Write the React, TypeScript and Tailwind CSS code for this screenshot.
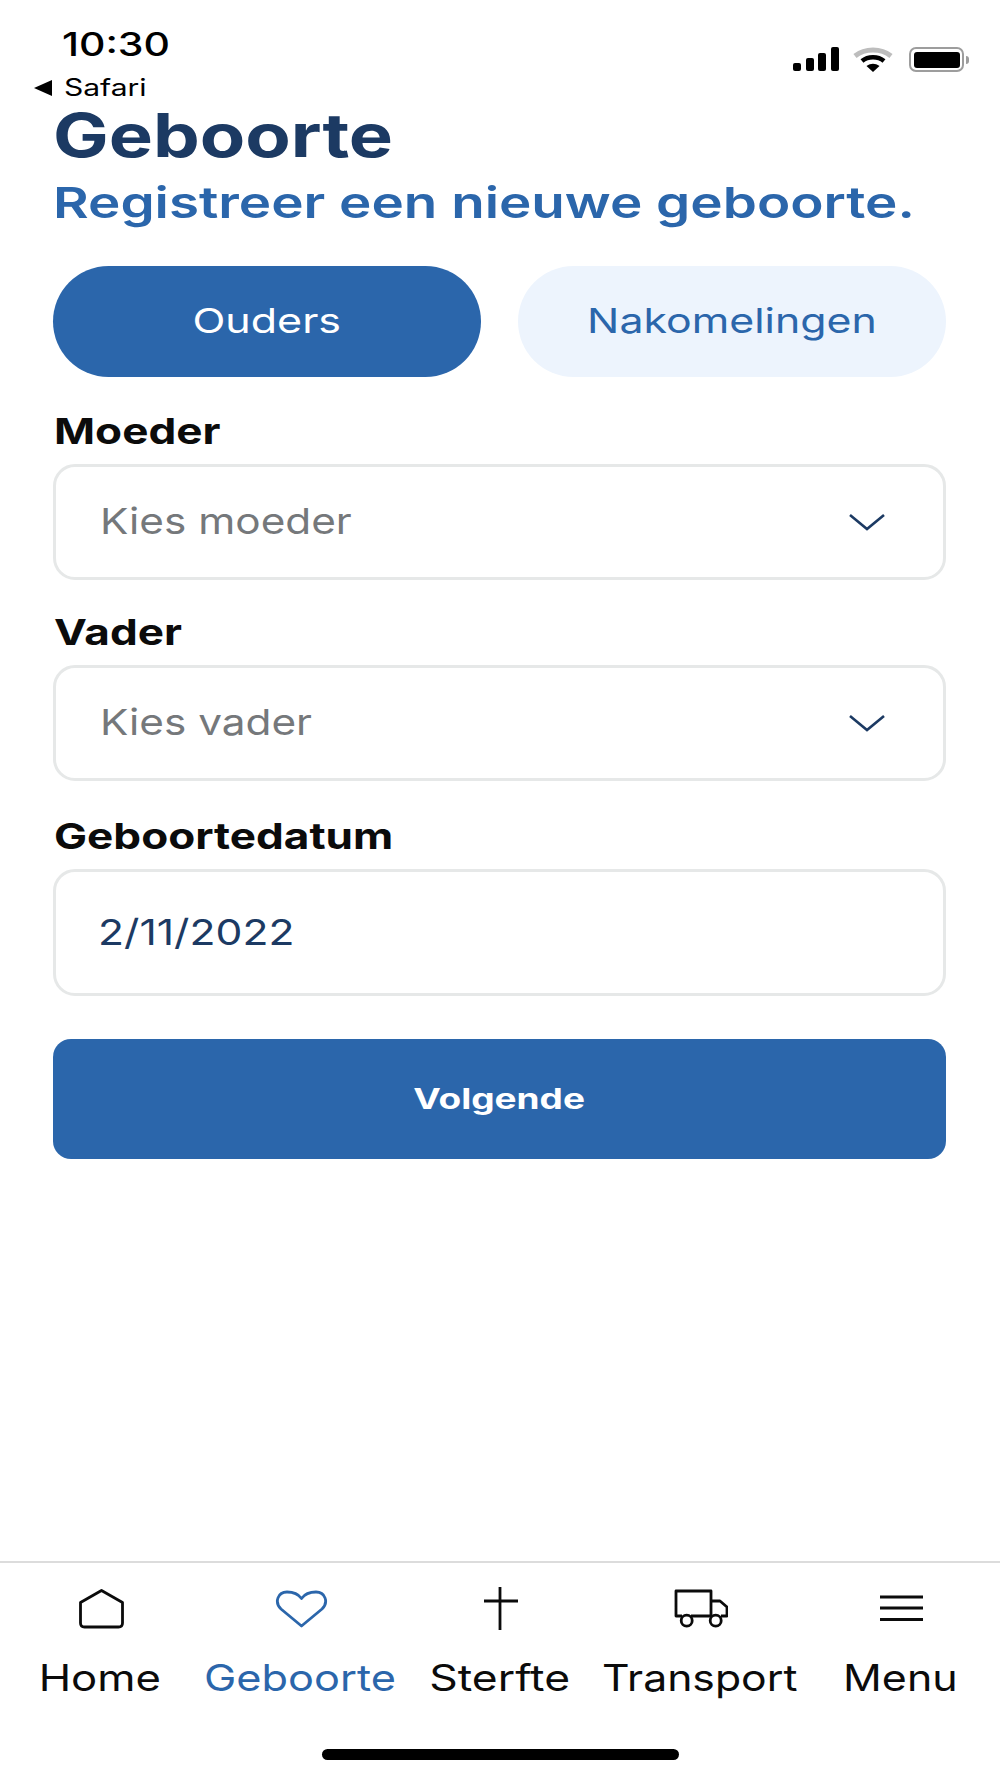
const font = "font-['Inter',sans-serif]";

function Chevron() {
  return (
    <svg width="38" height="18" viewBox="0 0 38 18" fill="none" className="stroke-[#1c3a63]" strokeWidth="2.6">
      <path d="M2 2 L19 16 L36 2" />
    </svg>
  );
}

function StatusIcons() {
  return (
    <div className="flex items-start gap-[14px] pt-[18px]">
      <svg width="46" height="24" viewBox="0 0 46 24" fill="#000">
        <rect x="0" y="16" width="8" height="8" rx="2" />
        <rect x="13" y="11" width="8" height="13" rx="2" />
        <rect x="25" y="6" width="8" height="18" rx="2" />
        <rect x="38" y="0" width="8" height="24" rx="2" />
      </svg>
      <svg width="40" height="25" viewBox="0 0 40 25" fill="none">
        <path d="M2 9 C12 1 28 1 38 9" stroke="#bdbdbd" strokeWidth="5" />
        <path d="M9 14 C15 9 25 9 31 14" stroke="#000" strokeWidth="4.5" />
        <path d="M13.5 19 L20 25 L26.5 19 C22 16 18 16 13.5 19 Z" fill="#000" />
      </svg>
      <div className="ml-[2px] flex items-center">
        <div className="flex h-[25px] w-[55px] items-center justify-center rounded-[7px] border-[2.5px] border-[#9d9d9d]">
          <div className="h-[16px] w-[46px] rounded-[3px] bg-black" />
        </div>
        <div className="ml-[2px] h-[8px] w-[3px] rounded-r-full bg-[#9d9d9d]" />
      </div>
    </div>
  );
}

function Field({ label, children, className }: { label: string; children: React.ReactNode; className: string }) {
  return (
    <div className={className}>
      <div className="ml-[1px] text-[36px] font-bold leading-[36px] text-[#0b0b0b]">
        <span className="inline-block origin-left scale-x-[1.225]">{label}</span>
      </div>
      {children}
    </div>
  );
}

function SelectBox({ placeholder }: { placeholder: string }) {
  return (
    <div className="mt-[15px] flex h-[116px] items-center justify-between rounded-[22px] border-[3px] border-[#e6e8e8] bg-white pl-[44px] pr-[57px]">
      <span className="mb-[2px] inline-block origin-left scale-x-[1.175] text-[36px] leading-[36px] text-[#75787b]">{placeholder}</span>
      <Chevron />
    </div>
  );
}

const navItems = [
  {
    label: 'Home',
    active: false,
    scale: 'scale-x-[1.18]',
    icon: <path d="M8.5 15.5 L29.5 3.5 L50.5 15.5 V36 Q50.5 40 46.5 40 H12.5 Q8.5 40 8.5 36 Z" strokeLinejoin="round" />,
  },
  {
    label: 'Geboorte',
    active: true,
    scale: 'scale-x-[1.17]',
    icon: <path d="M29.5 39 L9 22 C2 15 6 5 15 5 C22 5 27 8 29.5 11.5 C32 8 37 5 44 5 C53 5 57 15 50 22 Z" strokeLinejoin="round" />,
  },
  {
    label: 'Sterfte',
    active: false,
    scale: 'scale-x-[1.2]',
    icon: <path d="M28 0 V43 M12 14 H46" />,
  },
  {
    label: 'Transport',
    active: false,
    scale: 'scale-x-[1.155]',
    icon: (
      <>
        <path d="M10 29 H4 V4 H39 V29 H19 M39 14 H48 L55 20 V29 H49 M39 29 H38" strokeLinejoin="round" />
        <circle cx="14.7" cy="33.7" r="5.5" />
        <circle cx="43.7" cy="33.7" r="5.5" />
      </>
    ),
  },
  {
    label: 'Menu',
    active: false,
    scale: 'scale-x-[1.16]',
    icon: <path d="M8 10 H51 M8 21 H51 M8 32.5 H51" />,
  },
];

export default function App() {
  return (
    <div className={`${font} flex h-[1778px] w-[1000px] flex-col overflow-hidden bg-white`}>
      <div className="flex items-start justify-between pl-[34px] pr-[31px] pt-[29px]">
        <div>
          <div className="ml-[28px] text-[32px] font-medium leading-[32px] text-black">
            <span className="inline-block origin-left scale-x-[1.28]">10:30</span>
          </div>
          <div className="mt-[15px] flex items-center gap-[12px]">
            <div className="h-0 w-0 border-y-[8px] border-r-[18px] border-y-transparent border-r-black" />
            <span className="inline-block origin-left scale-x-[1.25] text-[24px] leading-[24px] text-black">Safari</span>
          </div>
        </div>
        <StatusIcons />
      </div>

      <main className="pl-[53px] pr-[54px]">
        <h1 className="mt-[5px] text-[60px] font-bold leading-[60px] text-[#1c3a63]">
          <span className="inline-block origin-left scale-x-[1.237]">Geboorte</span>
        </h1>
        <p className="mt-[16px] whitespace-nowrap text-[43px] font-semibold leading-[43px] text-[#2b66ab]">
          <span className="inline-block origin-left scale-x-[1.273]">Registreer een nieuwe geboorte.</span>
        </p>

        <div className="mt-[42px] grid grid-cols-2 gap-[37px]">
          <button className="h-[111px] rounded-full bg-[#2b66ab] pb-[2px] text-[34px] text-white">
            <span className="inline-block scale-x-[1.265]">Ouders</span>
          </button>
          <button className="h-[111px] rounded-full bg-[#edf4fd] pb-[2px] text-[34px] text-[#2b66ab]">
            <span className="inline-block scale-x-[1.26]">Nakomelingen</span>
          </button>
        </div>

        <Field label="Moeder" className="mt-[36px]">
          <SelectBox placeholder="Kies moeder" />
        </Field>
        <Field label="Vader" className="mt-[34px]">
          <SelectBox placeholder="Kies vader" />
        </Field>
        <Field label="Geboortedatum" className="mt-[37px]">
          <div className="mt-[15px] flex h-[127px] items-center rounded-[22px] border-[3px] border-[#e6e8e8] bg-white pl-[42px]">
            <span className="mb-[2px] inline-block origin-left scale-x-[1.185] text-[36px] leading-[36px] text-[#1c3a63]">2/11/2022</span>
          </div>
        </Field>

        <button className="mt-[43px] h-[120px] w-full rounded-[18px] bg-[#2b66ab] text-[28px] font-bold text-white">
          <span className="inline-block scale-x-[1.32]">Volgende</span>
        </button>
      </main>

      <div className="flex-1" />

      <nav className="border-t-[2px] border-[#dcdcdc] pt-[24px]">
        <div className="grid grid-cols-5">
          {navItems.map((item) => (
            <div key={item.label} className={`flex flex-col items-center ${item.active ? 'text-[#2b66ab]' : 'text-[#0b0b0b]'}`}>
              <svg width="56" height="44" viewBox="0 0 56 44" fill="none" stroke="currentColor" strokeWidth="2.8">
                {item.icon}
              </svg>
              <span className={`mt-[28px] mb-[1px] inline-block whitespace-nowrap text-[37px] leading-[37px] ${item.scale}`}>{item.label}</span>
            </div>
          ))}
        </div>
        <div className="mx-auto mb-[18px] mt-[52px] h-[11px] w-[357px] rounded-full bg-black" />
      </nav>
    </div>
  );
}
